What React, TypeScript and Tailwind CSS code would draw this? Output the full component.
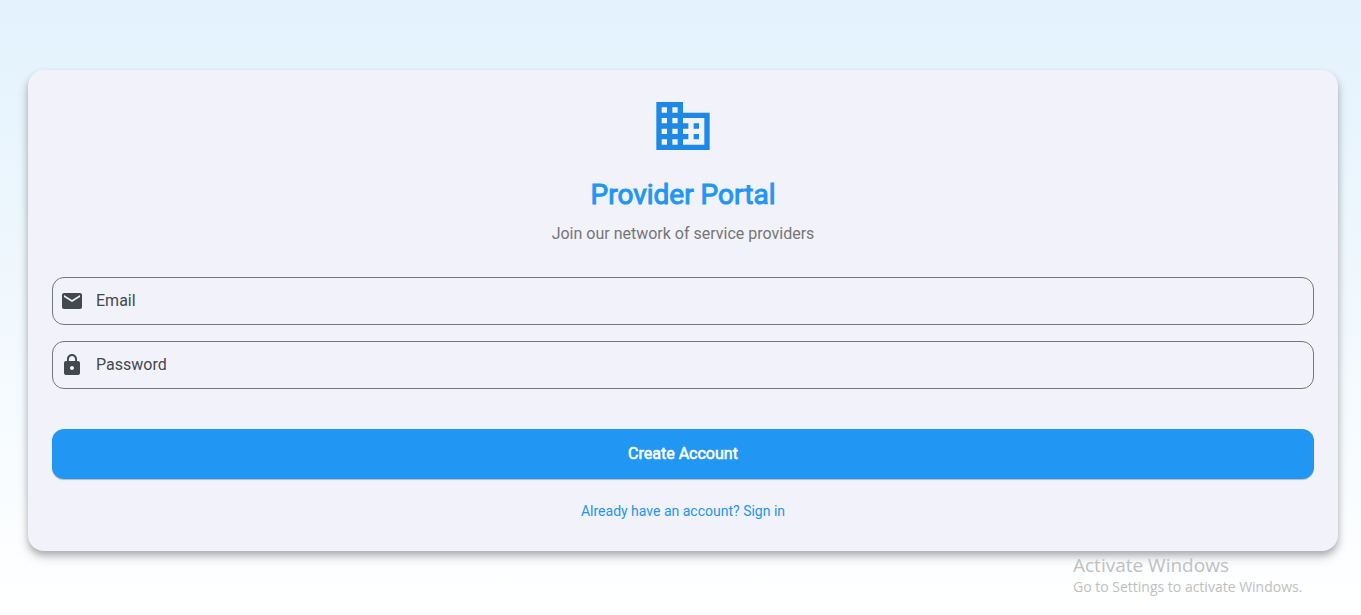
import React from "react";

function BuildingIcon() {
  return (
    <svg viewBox="0 0 24 24" className="size-16 fill-[#1e88e5]" aria-hidden="true">
      <path d="M12 7V3H2v18h20V7H12zM6 19H4v-2h2v2zm0-4H4v-2h2v2zm0-4H4V9h2v2zm0-4H4V5h2v2zm4 12H8v-2h2v2zm0-4H8v-2h2v2zm0-4H8V9h2v2zm0-4H8V5h2v2zm10 12h-8v-2h2v-2h-2v-2h2v-2h-2V9h8v10zm-2-8h-2v2h2v-2zm0 4h-2v2h2v-2z" />
    </svg>
  );
}

const mailPath =
  "M20 4H4c-1.1 0-1.99.9-1.99 2L2 18c0 1.1.9 2 2 2h16c1.1 0 2-.9 2-2V6c0-1.1-.9-2-2-2zm0 4l-8 5-8-5V6l8 5 8-5v2z";
const lockPath =
  "M18 8h-1V6c0-2.76-2.24-5-5-5S7 3.24 7 6v2H6c-1.1 0-2 .9-2 2v10c0 1.1.9 2 2 2h12c1.1 0 2-.9 2-2V10c0-1.1-.9-2-2-2zm-6 9c-1.1 0-2-.9-2-2s.9-2 2-2 2 .9 2 2-.9 2-2 2zm3.1-9H8.9V6c0-1.71 1.39-3.1 3.1-3.1 1.71 0 3.1 1.39 3.1 3.1v2z";

type FieldProps = { id: string; label: string; type: string; icon: string };

function Field({ id, label, type, icon }: FieldProps) {
  return (
    <div className="flex h-12 items-center gap-3 rounded-xl border border-[#74777f] px-[7px] focus-within:border-[#2196f3]">
      <svg viewBox="0 0 24 24" className="size-6 shrink-0 fill-[#43474e]" aria-hidden="true">
        <path d={icon} />
      </svg>
      <div className="relative h-full min-w-0 flex-1">
        <input
          id={id}
          type={type}
          placeholder=" "
          className="peer size-full bg-transparent text-base text-[#1a1c1e] outline-none"
        />
        {/* The label rests over the empty field and gives way to typed text. */}
        <label
          htmlFor={id}
          className="invisible absolute inset-0 flex cursor-text items-center text-base text-[#43474e] peer-placeholder-shown:visible"
        >
          {label}
        </label>
      </div>
    </div>
  );
}

export default function App() {
  return (
    <div className="relative min-h-screen bg-linear-to-b from-[#e3f2fd] to-white pt-[70px] pr-[23px] pb-16 pl-7 font-['Roboto',sans-serif]">
      <main className="flex flex-col items-center rounded-2xl bg-[#f2f2fb] p-6 shadow-[0_4px_6px_rgba(0,0,0,0.2),0_6px_12px_rgba(0,0,0,0.16)]">
        <BuildingIcon />
        <h1 className="mt-4 text-[28px] leading-[42px] text-[#2196f3] [-webkit-text-stroke:1px_currentColor]">
          Provider Portal
        </h1>
        <p className="mt-1.5 text-base text-[#757575]">Join our network of service providers</p>
        <form className="mt-[31px] flex w-full flex-col gap-4" onSubmit={(e) => e.preventDefault()}>
          <Field id="email" label="Email" type="email" icon={mailPath} />
          <Field id="password" label="Password" type="password" icon={lockPath} />
          <button
            type="submit"
            className="mt-6 h-[50px] rounded-xl bg-[#2196f3] text-base text-white shadow-[0_1px_1px_rgba(0,0,0,0.25)] [-webkit-text-stroke:0.6px_currentColor]"
          >
            Create Account
          </button>
        </form>
        <a href="#sign-in" className="mt-4 text-sm leading-8 text-[#2196f3]">
          Already have an account? Sign in
        </a>
      </main>
      <aside className="pointer-events-none absolute right-[52px] bottom-[18px] w-[236px] font-['Open_Sans',sans-serif] whitespace-nowrap text-[#c0c0c0]">
        <p className="text-[19px] leading-6">Activate Windows</p>
        <p className="text-sm leading-5">Go to Settings to activate Windows.</p>
      </aside>
    </div>
  );
}
